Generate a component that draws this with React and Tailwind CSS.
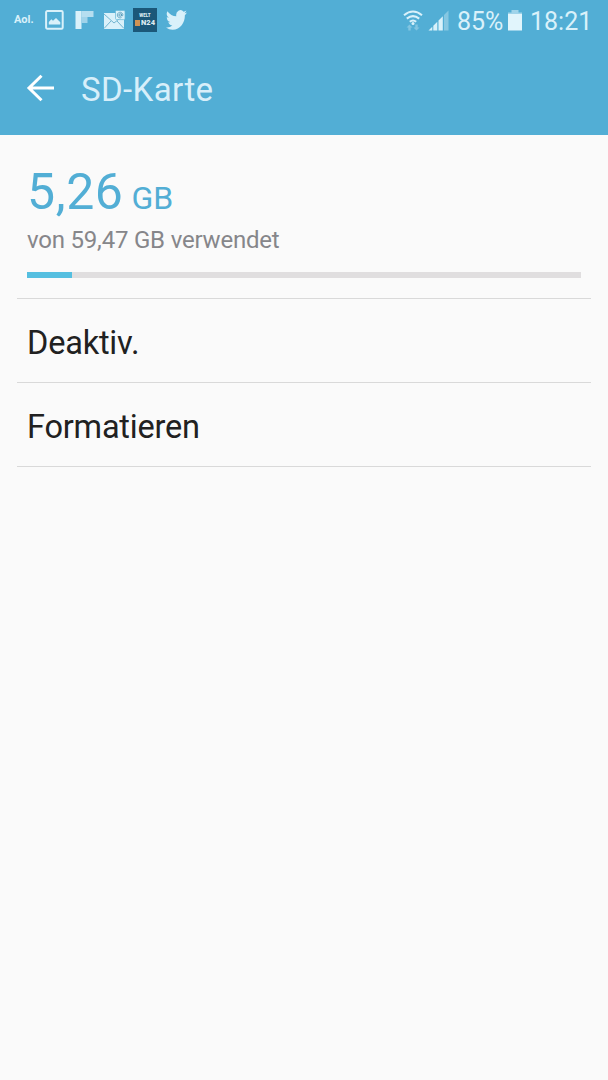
import React from "react";

const used = 44.5;
const total = 554;

function NotificationIcons() {
  return (
    <div className="flex items-center pb-px">
      <span className="w-[31px] shrink-0 text-[11px] leading-[14px] font-bold text-[#d9f1fa]">Aol.</span>
      <svg className="h-5 w-[19px]" viewBox="0 0 19 20" fill="none">
        <rect x="1.1" y="1.1" width="16.6" height="17.6" rx="1.2" stroke="#d9f1fa" strokeWidth="2" />
        <path d="M3.8 14.5V12L6.4 9.2l1.6 1.6L11 8l4.3 4.2v2.3z" fill="#d9f1fa" />
      </svg>
      <svg className="ml-[11px] h-5 w-[19px]" viewBox="0 0 19 20">
        <path d="M0.5 1h6v18h-6z" fill="#d9f1fa" />
        <path d="M6.5 1h12v6h-12z" fill="#b5def0" />
        <path d="M6.5 7h6v6h-6z" fill="#a0d3ea" />
      </svg>
      <svg className="ml-[10px] h-5 w-[22px]" viewBox="0 0 22 20">
        <path d="M0 3h20v16H0z" fill="#d9f1fa" />
        <path d="M0 4l10 9L20 5M0 18.5l7-7.5M20 18.5l-7-7.5" stroke="#65aecb" strokeWidth="0.9" fill="none" />
        <rect x="11.5" y="0.4" width="9.5" height="9.2" rx="1.2" fill="#d9f1fa" stroke="#65b7d7" strokeWidth="0.7" />
        <circle cx="16.2" cy="5" r="1.3" fill="none" stroke="#559bb9" strokeWidth="0.9" />
        <path d="M17.5 3.7v2.1q1.4.6 1.4-1A2.8 2.8 0 1 0 17.5 7.5" fill="none" stroke="#559bb9" strokeWidth="0.8" />
      </svg>
      <div className="ml-[7px] flex h-6 w-[24px] flex-col items-center bg-[#1b5879] pt-[5px] text-[#dcebf1]">
        <span className="text-[4.5px] leading-[5px] font-black">WELT</span>
        <div className="mt-px flex items-center">
          <span className="mr-px h-[6px] w-[5px] bg-[#cf9354]" />
          <span className="text-[7.5px] leading-[8px] font-black">N24</span>
        </div>
      </div>
      <svg className="ml-[9px] h-[20px] w-[21px]" viewBox="0 2 24 20" preserveAspectRatio="none" fill="#d9f1fa">
        <path d="M23.95 4.57a10 10 0 0 1-2.82.78 4.96 4.96 0 0 0 2.16-2.73 10 10 0 0 1-3.12 1.19 4.92 4.92 0 0 0-8.39 4.48A13.9 13.9 0 0 1 1.64 3.16 4.92 4.92 0 0 0 3.16 9.72a4.9 4.9 0 0 1-2.23-.61v.06a4.92 4.92 0 0 0 3.95 4.83 5 5 0 0 1-2.21.08 4.94 4.94 0 0 0 4.6 3.42A9.87 9.87 0 0 1 0 19.54a13.99 13.99 0 0 0 7.55 2.21c9.05 0 14-7.5 14-13.98l-.02-.63a9.9 9.9 0 0 0 2.42-2.57z" />
      </svg>
    </div>
  );
}

function StatusBar() {
  return (
    <div className="flex h-[41px] items-center justify-between pr-[16px] pl-[14px]">
      <NotificationIcons />
      <div className="flex items-center text-[25px] leading-[30px] text-[#d9f1fa]">
        <svg className="h-[22px] w-[20px]" viewBox="0 0 20 22" fill="none">
          <path d="M1 5.2Q10-2.2 19 5.2M3.8 8.6Q10 3.6 16.2 8.6M6.8 11.8Q10 9.2 13.2 11.8" stroke="#d9f1fa" strokeWidth="2.1" />
          <circle cx="10" cy="13.6" r="1.5" fill="#d9f1fa" />
          <path d="M6.5 14.5l3 3H7.7v3H5.3v-3H3.5zM13.5 20.5l-3-3h1.8v-3h2.4v3h1.8z" fill="#82c5e1" />
        </svg>
        <svg className="ml-[5px] h-[22px] w-[21px]" viewBox="0 0 21 22" fill="#d9f1fa">
          <path d="M0.5 20.5L4.3 16.7V20.5zM5.3 20.5v-4.8L9.3 11.7v8.8zM10.5 20.5V10.5L14.8 6.2v14.3z" />
          <path d="M16 20.5V5L20.5 .5V20.5z" fill="#86c7e2" />
        </svg>
        <span className="ml-[8px] w-[47px] pt-[2px] whitespace-nowrap">85%</span>
        <svg className="ml-[4px] h-[21px] w-[14px]" viewBox="0 0 14 21">
          <path d="M0 2.5h3.5V0h7v2.5H14V5H0z" fill="#a0d4ea" />
          <path d="M0 4h14V20.5H0z" fill="#e1f5fc" />
        </svg>
        <span className="ml-[8px] w-[62px] pt-[2px] whitespace-nowrap">18:21</span>
      </div>
    </div>
  );
}

function Header() {
  return (
    <header className="h-[135px] bg-[#52aed5]">
      <StatusBar />
      <div className="flex h-[94px] items-center pl-[26px]">
        <svg className="h-[28px] w-[28px]" viewBox="0 0 28 28" fill="none" stroke="#fff" strokeWidth="3">
          <path d="M15.5 1.8L3 14l12.5 12.2M3 14h25" />
        </svg>
        <h1 className="ml-[27px] pt-[3px] text-[33px] leading-[40px] tracking-[0.4px] text-[#d7effa]">SD-Karte</h1>
      </div>
    </header>
  );
}

function StorageSummary() {
  return (
    <section className="h-[163px] px-[27px] pt-[27px]">
      <div className="flex h-[60px] items-baseline gap-[8px] whitespace-nowrap text-[#52aed5]">
        <span className="text-[50px] leading-[60px] tracking-[0.6px]">5,26</span>
        <span className="text-[32px] leading-[40px]">GB</span>
      </div>
      <p className="mt-[4px] text-[24px] leading-[28px] tracking-[-0.2px] text-[#86868a]">von 59,47 GB verwendet</p>
      <div className="mt-[18px] h-[6px] bg-[#e0dedf]">
        <div className="h-full bg-[#55bfe0]" style={{ width: `${(used / total) * 100}%` }} />
      </div>
    </section>
  );
}

export default function App() {
  return (
    <div className="min-h-[1080px] w-[608px] overflow-hidden bg-[#fafafa] font-['Roboto',sans-serif]">
      <Header />
      <StorageSummary />
      <ul className="mx-[17px] border-t border-[#d9d9d9] text-[32.5px] leading-[40px] tracking-[-0.2px] text-[#212121]">
        {["Deaktiv.", "Formatieren"].map((label) => (
          <li key={label} className="flex h-[84px] items-center border-b border-[#d9d9d9] pt-[4px] pl-[10px]">{label}</li>
        ))}
      </ul>
    </div>
  );
}
